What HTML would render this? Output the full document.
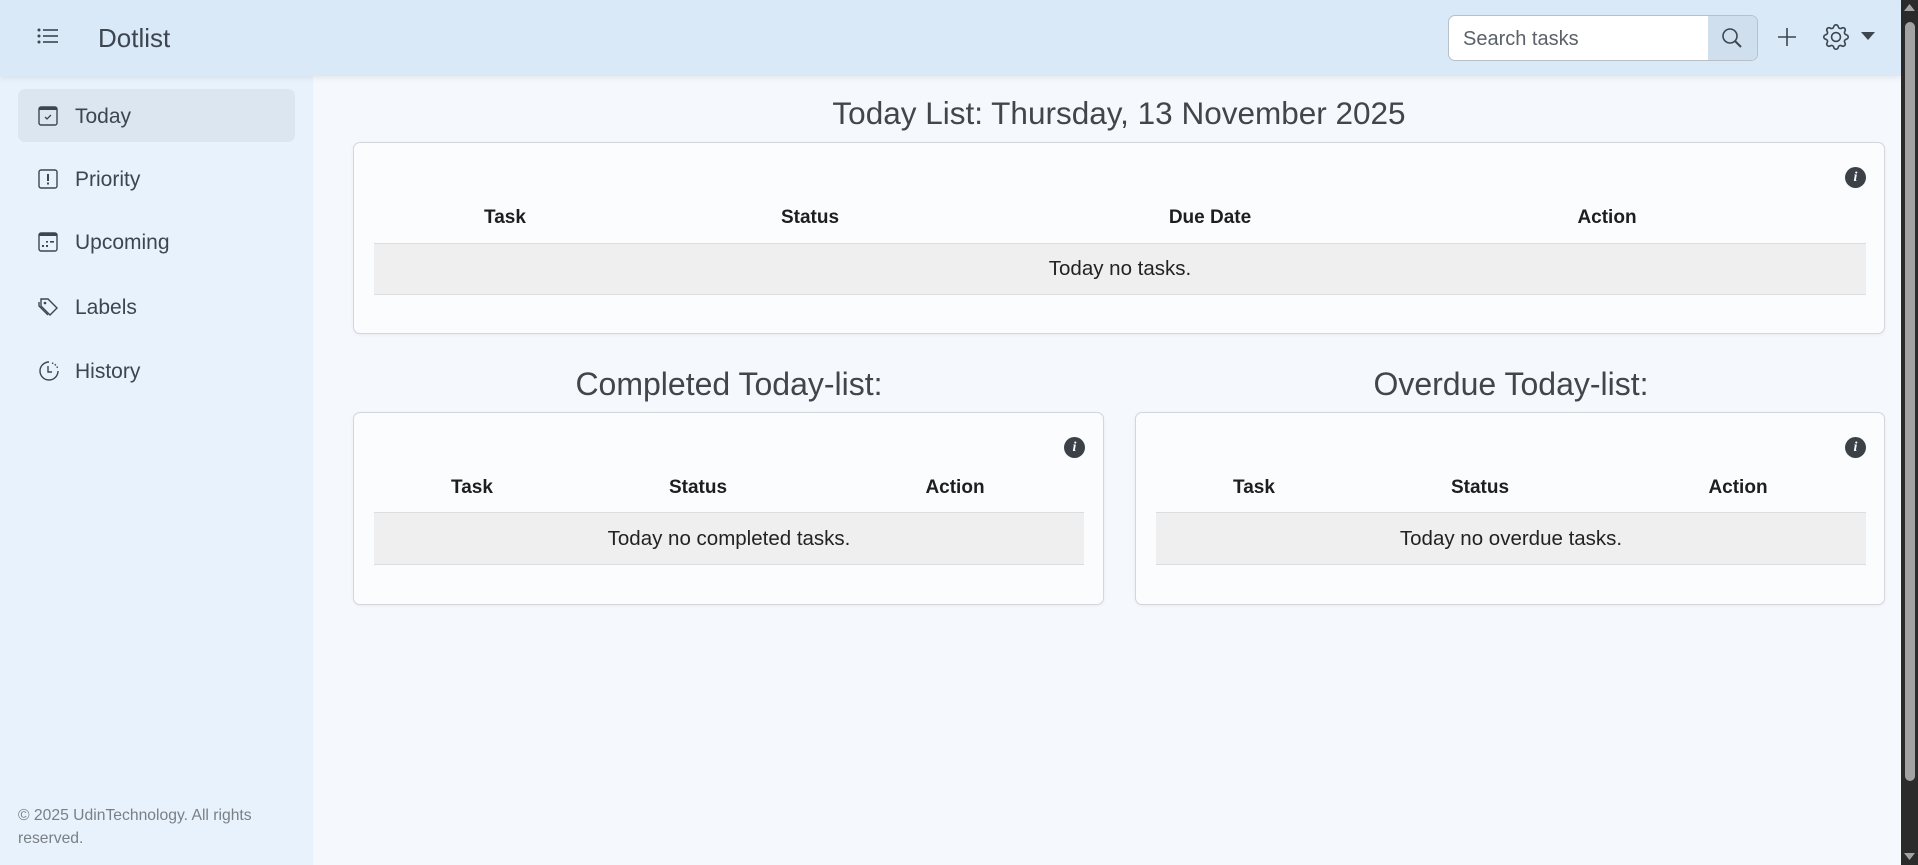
<!DOCTYPE html>
<html><head><meta charset="utf-8">
<style>
*{box-sizing:border-box;margin:0;padding:0}
html,body{width:1918px;height:865px;overflow:hidden}
body{font-family:"Liberation Sans",sans-serif;background:#f5f9fd;position:relative;color:#212529}
.abs{position:absolute}
.hdr{left:0;top:0;width:1901px;height:76px;background:#d9e9f8;box-shadow:0 2px 6px rgba(0,0,0,.08);z-index:2}
.side{left:0;top:76px;width:313px;height:789px;background:#e8f2fc}
.nav{left:18px;width:277px;height:53px;border-radius:7px}
.nav span{position:absolute;left:57px;top:50%;transform:translateY(-45%);font-size:21px;color:#3d4650}
.nav svg{position:absolute;left:20px;top:50%;transform:translateY(-50%)}
.card{background:#fbfcfe;border:1px solid #d3d6da;border-radius:7px;box-shadow:0 1px 3px rgba(0,0,0,.06)}
.th{font-weight:bold;font-size:19px;color:#1e1e1e;transform:translateX(-50%);white-space:nowrap}
.row{background:#efeff0;border-top:1px solid #dcdde0;border-bottom:1px solid #dcdde0;font-size:20.5px;color:#222;text-align:center}
.info{width:21px;height:21px;border-radius:50%;background:#3c4148;color:#fff;font:italic bold 14px "Liberation Serif",serif;text-align:center;line-height:21px}
.h2{font-size:31px;color:#41464c;transform:translateX(-50%);white-space:nowrap}
</style></head><body>
<div class="abs hdr">
  <svg class="abs" style="left:37px;top:27px" width="22" height="18" viewBox="0 0 22 18"><g fill="#3d4650"><circle cx="2" cy="3" r="1.5"/><circle cx="2" cy="9" r="1.5"/><circle cx="2" cy="15" r="1.5"/><rect x="6" y="2.2" width="15" height="1.6"/><rect x="6" y="8.2" width="15" height="1.6"/><rect x="6" y="14.2" width="15" height="1.6"/></g></svg>
  <div class="abs" style="left:98px;top:23px;font-size:26px;color:#3d4650">Dotlist</div>
  <div class="abs" style="left:1448px;top:15px;width:310px;height:46px;border:1px solid #b9c0c7;border-radius:7px;background:#fff;overflow:hidden">
    <div class="abs" style="left:14px;top:12px;font-size:20px;color:#5a6168">Search tasks</div>
    <div class="abs" style="right:0;top:0;width:49px;height:46px;background:#cfdfee"></div>
    <svg class="abs" style="right:14px;top:11px" width="22" height="22" viewBox="0 0 22 22"><circle cx="9" cy="9" r="7" fill="none" stroke="#3d4650" stroke-width="1.6"/><path d="M14 14l6 6" stroke="#3d4650" stroke-width="2"/></svg>
  </div>
  <svg class="abs" style="left:1776px;top:26px" width="22" height="22" viewBox="0 0 22 22"><path d="M11 2v18M2 11h18" stroke="#3d4650" stroke-width="1.6"/></svg>
  <svg class="abs" style="left:1823px;top:24px" width="26" height="26" viewBox="0 0 16 16"><path fill="#3d4650" d="M8 4.754a3.246 3.246 0 1 0 0 6.492 3.246 3.246 0 0 0 0-6.492M5.754 8a2.246 2.246 0 1 1 4.492 0 2.246 2.246 0 0 1-4.492 0"/><path fill="#3d4650" d="M9.796 1.343c-.527-1.790-3.065-1.790-3.592 0l-.094.319a.873.873 0 0 1-1.255.52l-.292-.16c-1.640-.892-3.433.902-2.540 2.541l.159.292a.873.873 0 0 1-.52 1.255l-.319.094c-1.790.527-1.790 3.065 0 3.592l.319.094a.873.873 0 0 1 .52 1.255l-.16.292c-.892 1.640.901 3.434 2.541 2.540l.292-.159a.873.873 0 0 1 1.255.52l.094.319c.527 1.790 3.065 1.790 3.592 0l.094-.319a.873.873 0 0 1 1.255-.52l.292.16c1.640.893 3.434-.902 2.540-2.541l-.159-.292a.873.873 0 0 1 .52-1.255l.319-.094c1.790-.527 1.790-3.065 0-3.592l-.319-.094a.873.873 0 0 1-.52-1.255l.16-.292c.893-1.640-.902-3.433-2.541-2.540l-.292.159a.873.873 0 0 1-1.255-.52zm-2.633.283c.246-.835 1.428-.835 1.674 0l.094.319a1.873 1.873 0 0 0 2.693 1.115l.291-.16c.764-.415 1.600.42 1.184 1.185l-.159.292a1.873 1.873 0 0 0 1.116 2.692l.318.094c.835.246.835 1.428 0 1.674l-.319.094a1.873 1.873 0 0 0-1.115 2.693l.16.291c.415.764-.42 1.600-1.185 1.184l-.291-.159a1.873 1.873 0 0 0-2.693 1.116l-.094.318c-.246.835-1.428.835-1.674 0l-.094-.319a1.873 1.873 0 0 0-2.692-1.115l-.292.16c-.764.415-1.600-.42-1.184-1.185l.159-.291A1.873 1.873 0 0 0 1.945 8.930l-.319-.094c-.835-.246-.835-1.428 0-1.674l.319-.094A1.873 1.873 0 0 0 3.060 4.377l-.16-.292c-.415-.764.42-1.600 1.185-1.184l.292.159a1.873 1.873 0 0 0 2.692-1.115z"/></svg>
  <svg class="abs" style="left:1861px;top:32px" width="14" height="8" viewBox="0 0 14 8"><path d="M0 0h14L7 8z" fill="#3d4650"/></svg>
</div>
<div class="abs side">
  <div class="abs nav" style="top:13px;background:#dce6f0">
    <svg width="20" height="20" viewBox="0 0 20 20"><rect x="1" y="1" width="18" height="18" rx="2" fill="none" stroke="#3d4650" stroke-width="1.4"/><rect x="1" y="1" width="18" height="3" fill="#3d4650"/><path d="M7 11l2 2 4-4" fill="none" stroke="#3d4650" stroke-width="1.3"/></svg>
    <span>Today</span></div>
  <div class="abs nav" style="top:76px">
    <svg width="20" height="20" viewBox="0 0 20 20"><rect x="1" y="1" width="18" height="18" rx="2" fill="none" stroke="#3d4650" stroke-width="1.4"/><rect x="9" y="5" width="2" height="7" fill="#3d4650"/><rect x="9" y="13.5" width="2" height="2" fill="#3d4650"/></svg>
    <span>Priority</span></div>
  <div class="abs nav" style="top:139px">
    <svg width="20" height="20" viewBox="0 0 20 20"><rect x="1" y="1" width="18" height="18" rx="2" fill="none" stroke="#3d4650" stroke-width="1.4"/><rect x="1" y="1" width="18" height="3" fill="#3d4650"/><g fill="#3d4650"><rect x="4" y="13" width="2" height="2"/><rect x="8" y="13" width="2" height="2"/><rect x="8" y="9" width="2" height="1.6"/><rect x="12" y="9" width="4" height="1.6"/></g></svg>
    <span>Upcoming</span></div>
  <div class="abs nav" style="top:204px">
    <svg width="22" height="22" viewBox="0 0 22 22"><path d="M3 3h7l9 9-7 7-9-9z" fill="none" stroke="#3d4650" stroke-width="1.4"/><path d="M1 6v4l9 9" fill="none" stroke="#3d4650" stroke-width="1.4"/><circle cx="7" cy="7" r="1.3" fill="#3d4650"/></svg>
    <span>Labels</span></div>
  <div class="abs nav" style="top:268px">
    <svg width="22" height="22" viewBox="0 0 22 22"><path d="M11 2a9 9 0 1 0 9 9" fill="none" stroke="#3d4650" stroke-width="1.4"/><path d="M14 3a9 9 0 0 1 6 6" fill="none" stroke="#3d4650" stroke-width="1.4" stroke-dasharray="1.5 1.5"/><path d="M10 6v6h4" fill="none" stroke="#3d4650" stroke-width="1.4"/></svg>
    <span>History</span></div>
  <div class="abs" style="left:18px;top:728px;font-size:15.7px;line-height:23px;color:#7a7f85;width:270px">© 2025 UdinTechnology. All rights<br>reserved.</div>
</div>

<div class="abs h2" style="left:1119px;top:95px;font-size:31.5px">Today List: Thursday, 13 November 2025</div>
<div class="abs card" style="left:353px;top:142px;width:1532px;height:192px">
  <div class="abs info" style="left:1491px;top:24px">i</div>
  <div class="abs th" style="left:151px;top:64px">Task</div>
  <div class="abs th" style="left:456px;top:64px">Status</div>
  <div class="abs th" style="left:856px;top:64px">Due Date</div>
  <div class="abs th" style="left:1253px;top:64px">Action</div>
  <div class="abs row" style="left:20px;top:100px;width:1492px;height:52px;line-height:50px">Today no tasks.</div>
</div>

<div class="abs h2" style="left:729px;top:366px;font-size:32px">Completed Today-list:</div>
<div class="abs h2" style="left:1511px;top:366px;font-size:32px">Overdue Today-list:</div>

<div class="abs card" style="left:353px;top:412px;width:751px;height:193px">
  <div class="abs info" style="left:710px;top:24px">i</div>
  <div class="abs th" style="left:118px;top:64px">Task</div>
  <div class="abs th" style="left:344px;top:64px">Status</div>
  <div class="abs th" style="left:601px;top:64px">Action</div>
  <div class="abs row" style="left:20px;top:99px;width:710px;height:53px;line-height:51px">Today no completed tasks.</div>
</div>
<div class="abs card" style="left:1135px;top:412px;width:750px;height:193px">
  <div class="abs info" style="left:709px;top:24px">i</div>
  <div class="abs th" style="left:118px;top:64px">Task</div>
  <div class="abs th" style="left:344px;top:64px">Status</div>
  <div class="abs th" style="left:602px;top:64px">Action</div>
  <div class="abs row" style="left:20px;top:99px;width:710px;height:53px;line-height:51px">Today no overdue tasks.</div>
</div>

<div class="abs" style="left:1901px;top:0;width:17px;height:865px;background:#2b2b2b">
  <div class="abs" style="left:4px;top:22px;width:10px;height:759px;border-radius:5px;background:#a3a3a3"></div>
  <svg class="abs" style="left:3px;top:4px" width="11" height="7"><path d="M0 7L5.5 0 11 7z" fill="#a3a3a3"/></svg>
  <svg class="abs" style="left:3px;top:853px" width="11" height="7"><path d="M0 0h11L5.5 7z" fill="#a3a3a3"/></svg>
</div>
</body></html>
